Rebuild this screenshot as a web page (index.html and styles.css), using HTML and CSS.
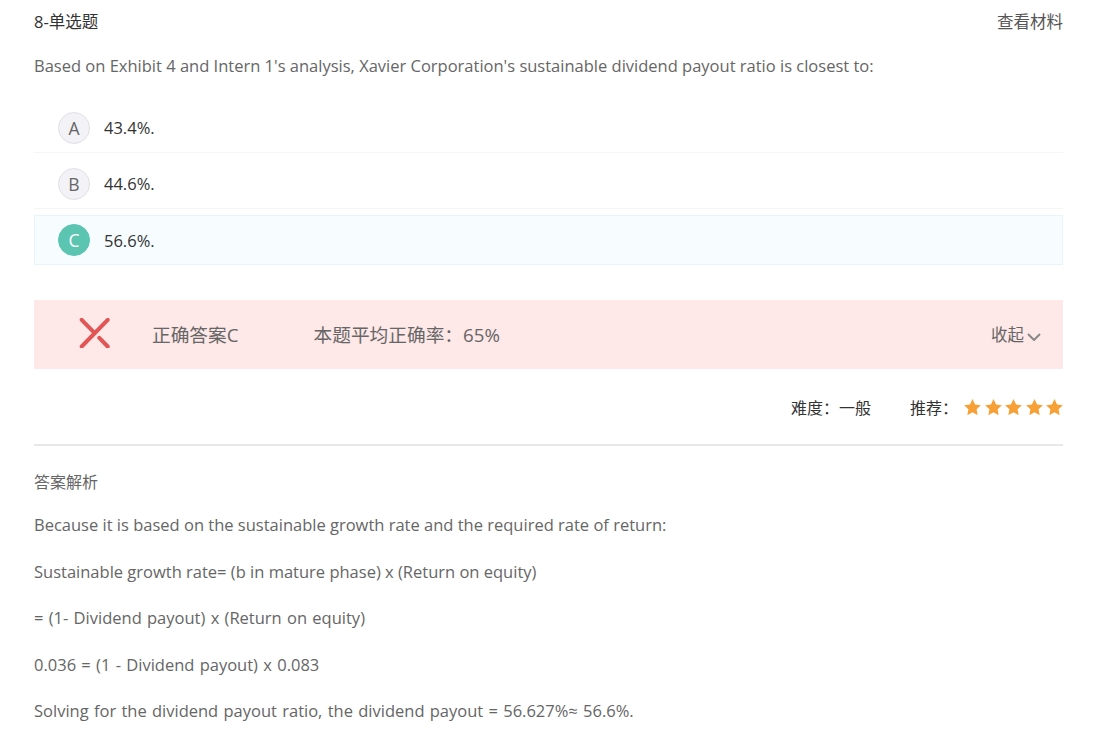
FILE: index.html
```html
<!DOCTYPE html>
<html lang="en">
<head>
    <meta charset="UTF-8">
    <title>8-单选题</title>
    <link rel="stylesheet" href="styles.css">
</head>
<body>
    <div class="page">
        <div class="top-row">
            <span class="q-type">8-单选题</span>
            <span class="q-link">查看材料</span>
        </div>
        <p class="q-text">Based on Exhibit 4 and Intern 1's analysis, Xavier Corporation's sustainable dividend payout ratio is closest to:</p>

        <ul class="options">
            <li class="option"><span class="letter">A</span><span>43.4%.</span></li>
            <li class="option"><span class="letter">B</span><span>44.6%.</span></li>
            <li class="option selected"><span class="letter">C</span><span>56.6%.</span></li>
        </ul>

        <div class="result">
            <svg class="result-icon" width="32" height="30" viewBox="0 0 32 30">
                <path d="M28.700 1.800 L2.700 28.500 M2.700 1.800 L15.700 15.200 M20.300 19.800 L28.700 28.500" fill="none"/>
            </svg>
            <span class="answer">正确答案C</span>
            <span class="rate">本题平均正确率：65%</span>
            <span class="collapse">收起
                <svg width="14" height="8" viewBox="0 0 14 8"><path d="M1 1 L7 7 L13 1" fill="none"/></svg>
            </span>
        </div>

        <div class="meta">
            <span class="level">难度：一般</span>
            <span class="recommend">推荐：</span>
            <span class="stars">
                <svg width="17" height="16" viewBox="0 0 24 23"><path d="M12 0l3.700 7.800 8.300 1.100-6.100 5.900 1.500 8.500-7.400-4.100-7.400 4.100 1.500-8.500L0 8.900l8.300-1.100z"/></svg>
                <svg width="17" height="16" viewBox="0 0 24 23"><path d="M12 0l3.700 7.800 8.300 1.100-6.100 5.900 1.500 8.500-7.400-4.100-7.400 4.100 1.500-8.500L0 8.900l8.300-1.100z"/></svg>
                <svg width="17" height="16" viewBox="0 0 24 23"><path d="M12 0l3.700 7.800 8.300 1.100-6.100 5.900 1.500 8.500-7.400-4.100-7.400 4.100 1.500-8.500L0 8.900l8.300-1.100z"/></svg>
                <svg width="17" height="16" viewBox="0 0 24 23"><path d="M12 0l3.700 7.800 8.300 1.100-6.100 5.900 1.500 8.500-7.400-4.100-7.400 4.100 1.500-8.500L0 8.900l8.300-1.100z"/></svg>
                <svg width="17" height="16" viewBox="0 0 24 23"><path d="M12 0l3.700 7.800 8.300 1.100-6.100 5.900 1.500 8.500-7.400-4.100-7.400 4.100 1.500-8.500L0 8.900l8.300-1.100z"/></svg>
            </span>
        </div>

        <div class="analysis">
            <h3>答案解析</h3>
            <p>Because it is based on the sustainable growth rate and the required rate of return:</p>
            <p>Sustainable growth rate= (b in mature phase) x (Return on equity)</p>
            <p class="wide">= (1- Dividend payout) x (Return on equity)</p>
            <p class="wide">0.036 = (1 - Dividend payout) x 0.083</p>
            <p class="wide">Solving for the dividend payout ratio, the dividend payout = 56.627%≈ 56.6%.</p>
        </div>
    </div>
</body>
</html>
```

FILE: styles.css
```css
html, body {
    margin: 0;
    height: 100%;
    overflow: hidden;
    background: #fff;
}
body {
    font-family: "Open Sans", "Noto Sans CJK SC", sans-serif;
    font-size: 16.5px;
    color: #666;
}
.page {
    padding: 8px 37px 0 34px;
}
.top-row {
    display: flex;
    justify-content: space-between;
    line-height: 27px;
}
.q-type {
    color: #333;
}
.q-link {
    color: #555;
}
.q-text {
    margin: 17px 0 0;
    line-height: 27px;
}
.options {
    list-style: none;
    margin: 24px 0 0;
    padding: 0;
}
.option {
    display: flex;
    align-items: center;
    height: 50px;
    padding-left: 24px;
    margin-bottom: 6px;
    border-bottom: 1px solid #f6f6f6;
    color: #333;
    box-sizing: border-box;
}
.letter {
    width: 30px;
    height: 30px;
    margin-right: 14px;
    border: 1px solid #e2e0e4;
    border-radius: 50%;
    background: #f3f2f6;
    color: #666;
    font-size: 17.500px;
    text-align: center;
    line-height: 30px;
}
.option.selected {
    border: 1px solid #e6f5fb;
    background: #f6fcff;
    padding-left: 23px;
    margin-bottom: 0;
}
.selected .letter {
    background: #5bc5b2;
    border-color: #5bc5b2;
    color: #fff;
}
.result {
    display: flex;
    align-items: center;
    height: 69px;
    box-sizing: border-box;
    padding-bottom: 2px;
    margin-top: 35px;
    background: #fee8e8;
    font-size: 18.700px;
}
.result-icon {
    margin-left: 45px;
    margin-bottom: 2px;
}
.result-icon path {
    stroke: #e25555;
    stroke-width: 4;
    stroke-linecap: round;
}
.answer {
    margin-left: 41px;
}
.rate {
    margin-left: 75px;
}
.collapse {
    margin-left: auto;
    margin-right: 22px;
    font-size: 16.500px;
    display: flex;
    align-items: center;
    gap: 3px;
}
.collapse svg {
    margin-top: 6px;
}
.collapse path {
    stroke: #888;
    stroke-width: 2;
}
.meta {
    display: flex;
    align-items: center;
    justify-content: flex-end;
    height: 75px;
    border-bottom: 2px solid #e8e8e8;
    color: #333;
    font-size: 16px;
}
.level {
    margin-right: 39px;
}
.recommend {
    margin-right: 6px;
}
.stars {
    display: flex;
    gap: 3.500px;
    margin-top: 1px;
}
.stars path {
    fill: #f7a035;
}
.analysis h3 {
    margin: 23px 0 0;
    font-size: 16px;
    font-weight: normal;
    line-height: 27px;
}
.analysis p {
    margin: 19.400px 0 0;
    line-height: 27px;
}
.analysis h3 + p {
    margin-top: 15.400px;
}
.analysis p.wide {
    word-spacing: 1px;
}
```
